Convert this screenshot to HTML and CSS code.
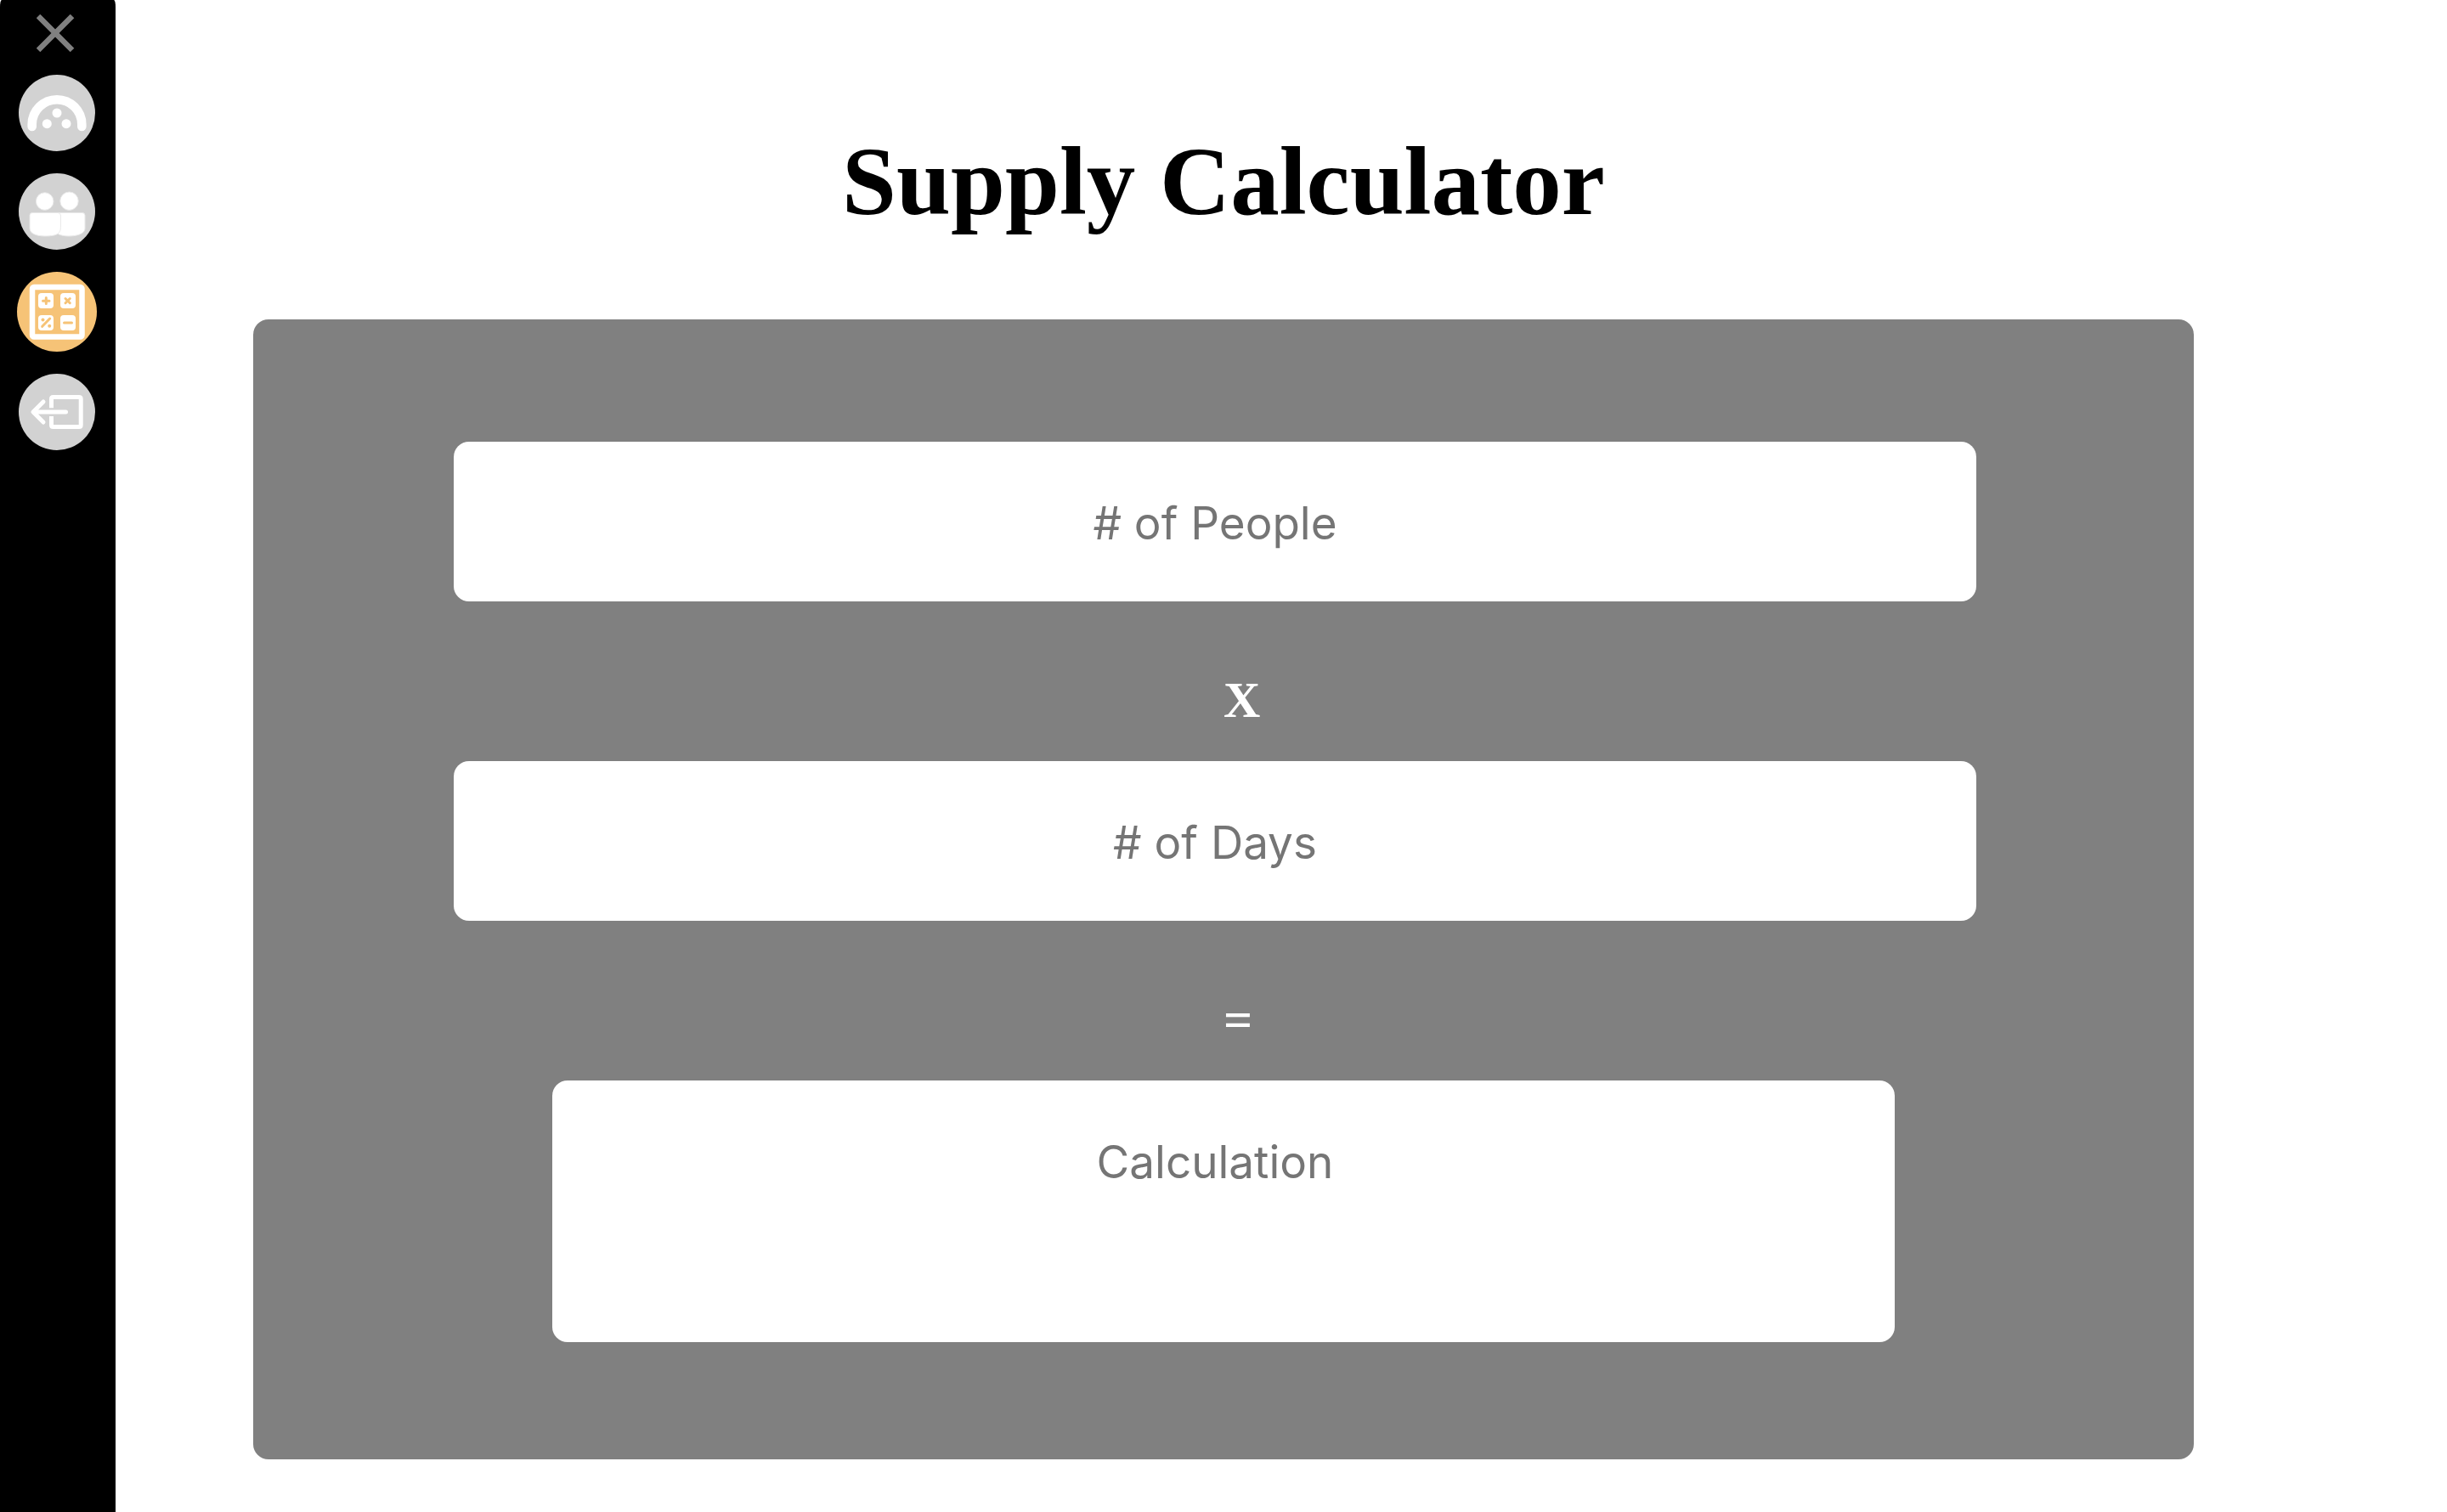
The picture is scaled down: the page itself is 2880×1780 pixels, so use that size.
FILE: index.html
```html
<!DOCTYPE html>
<html lang="en">
<head>
<meta charset="utf-8">
<title>Supply Calculator</title>
<link rel="stylesheet" href="styles.css">
</head>
<body>
<div class="app">
  <nav class="sidebar" aria-label="Main">
    <button class="close" type="button" aria-label="Close menu">
      <svg width="48" height="45" viewBox="0 0 48 45"><path d="M2 2L42 42M42 2L2 42" stroke="#808080" stroke-width="6.5"/></svg>
    </button>
    <a class="nav-link" href="#dashboard" aria-label="Dashboard">
      <svg viewBox="0 0 90 90">
        <path d="M15.7 61V58.5A29.3 29.3 0 0 1 74.3 58.5V61" fill="none" stroke="#fff" stroke-width="10.6" stroke-linecap="round"/>
        <g fill="#fff"><circle cx="45" cy="45" r="5.5"/><circle cx="33.3" cy="57.7" r="5.5"/><circle cx="56" cy="57.7" r="5.5"/></g>
      </svg>
    </a>
    <a class="nav-link" href="#people" aria-label="People">
      <svg viewBox="0 0 90 90" fill="#fff" stroke="#e9e9e9" stroke-width="1">
        <circle cx="59.5" cy="32.7" r="10.7"/>
        <circle cx="30.7" cy="33" r="10.3"/>
        <path d="M46 46.5H75Q78 46.5 78 49.5V65C78 71 69 74 59 74C53 74 47 72.5 46 71Z"/>
        <path d="M16 46.5H46Q49.5 46.5 49.5 50V62C49.5 70 47 74 31 74C21 74 13 71 13 65V49.5Q13 46.5 16 46.5Z"/>
      </svg>
    </a>
    <a class="nav-link active" href="#calculator" aria-label="Supply calculator" aria-current="page">
      <svg viewBox="0 0 94 94">
        <rect x="18" y="18" width="58.5" height="58.5" rx="2" fill="none" stroke="#fff" stroke-width="6.5"/>
        <g fill="#fff"><rect x="25" y="25" width="18" height="18" rx="4"/><rect x="51" y="25" width="18" height="18" rx="4"/><rect x="25" y="51" width="18" height="18" rx="4"/><rect x="51" y="51" width="18" height="18" rx="4"/></g>
        <g stroke="#f6c377" stroke-width="3" stroke-linecap="round"><path d="M34.3 30.5V37.5M30.5 34.2H38M57 31.5L62.3 36.7M62.3 31.5L57 36.7M29.7 64.3L38.7 55M55.5 60H64.5"/></g>
        <g fill="#f6c377"><circle cx="30.5" cy="56.5" r="2"/><circle cx="38.2" cy="63.8" r="2"/></g>
      </svg>
    </a>
    <a class="nav-link" href="#logout" aria-label="Log out">
      <svg viewBox="0 0 90 90" fill="none" stroke="#fff" stroke-width="5">
        <path d="M38.5 40.3V29.5Q38.5 27.5 40.5 27.5H71Q73.2 27.5 73.2 29.5V60.5Q73.2 62.5 71 62.5H40.5Q38.5 62.5 38.5 60.5V50"/>
        <path d="M55.5 45H18M29 33L17 45L29 57" stroke-linecap="round" stroke-linejoin="round"/>
      </svg>
    </a>
  </nav>
  <main class="content">
    <h1 class="title">Supply Calculator</h1>
    <form class="calculator">
      <input class="field" type="text" inputmode="numeric" placeholder="# of People" aria-label="Number of people">
      <span class="operator">X</span>
      <input class="field" type="text" inputmode="numeric" placeholder="# of Days" aria-label="Number of days">
      <span class="operator">=</span>
      <input class="field result" type="text" placeholder="Calculation" aria-label="Calculation" readonly>
    </form>
  </main>
</div>
</body>
</html>
```
FILE: styles.css
```css
* {
  box-sizing: border-box;
}

body {
  margin: 0;
  background: #fff;
  font-family: "Liberation Serif", "Times New Roman", serif;
}

.app {
  display: flex;
  min-height: 100vh;
}

.sidebar {
  display: flex;
  flex-direction: column;
  align-items: center;
  gap: 26px;
  width: 136px;
  flex-shrink: 0;
  padding: 17px 2px 0 0;
  background: #000;
  border-radius: 2px 2px 0 0 / 8px 8px 0 0;
}

.close {
  padding: 0;
  border: 0;
  background: none;
  cursor: pointer;
}

.close svg,
.nav-link svg {
  display: block;
}

.nav-link {
  width: 90px;
  height: 90px;
  border-radius: 50%;
  background: #d2d2d2;
}

.nav-link.active {
  width: 94px;
  height: 94px;
  background: #f6c377;
}

.content {
  flex: 1;
  min-width: 0;
  padding: 148px 298px 62px 162px;
}

.title {
  margin: 0 0 96px;
  font-size: 115px;
  line-height: 132px;
  text-align: center;
}

.calculator {
  display: flex;
  flex-direction: column;
  padding: 144px 0 138px;
  border-radius: 18px;
  background: #808080;
}

.field {
  height: 188px;
  margin: 0 256px 0 236px;
  padding: 4px 0 0;
  border: 0;
  border-radius: 18px;
  background: #fff;
  color: #000;
  font-family: Inter, sans-serif;
  font-size: 53px;
  text-align: center;
}

.field::placeholder {
  color: #757575;
  opacity: 1;
}

.result {
  height: 308px;
  margin: 0 352px;
  padding: 4px 20px 120px 0;
}

.operator {
  height: 188px;
  padding: 82px 0 38px;
  margin-left: 50%;
  color: #fff;
  font-size: 60px;
  font-weight: bold;
  line-height: 68px;
}
```
